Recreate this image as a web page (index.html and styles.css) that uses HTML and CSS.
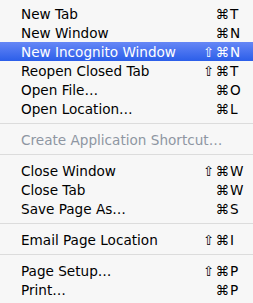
FILE: index.html
```html
<!DOCTYPE html>
<html lang="en">
<head>
    <meta charset="UTF-8">
    <title>File Menu</title>
    <link rel="stylesheet" href="styles.css">
</head>
<body>
    <div class="menu">
        <div class="item"><span class="label">New Tab</span><span class="mods">⌘</span><span class="key">T</span></div>
        <div class="item"><span class="label">New Window</span><span class="mods">⌘</span><span class="key">N</span></div>
        <div class="item selected"><span class="label">New Incognito Window</span><span class="mods">⇧⌘</span><span class="key">N</span></div>
        <div class="item"><span class="label">Reopen Closed Tab</span><span class="mods">⇧⌘</span><span class="key">T</span></div>
        <div class="item"><span class="label">Open File…</span><span class="mods">⌘</span><span class="key">O</span></div>
        <div class="item"><span class="label">Open Location…</span><span class="mods">⌘</span><span class="key">L</span></div>
        <div class="separator"></div>
        <div class="item disabled"><span class="label">Create Application Shortcut…</span></div>
        <div class="separator"></div>
        <div class="item"><span class="label">Close Window</span><span class="mods">⇧⌘</span><span class="key">W</span></div>
        <div class="item"><span class="label">Close Tab</span><span class="mods">⌘</span><span class="key">W</span></div>
        <div class="item"><span class="label">Save Page As…</span><span class="mods">⌘</span><span class="key">S</span></div>
        <div class="separator"></div>
        <div class="item"><span class="label">Email Page Location</span><span class="mods">⇧⌘</span><span class="key">I</span></div>
        <div class="separator"></div>
        <div class="item"><span class="label">Page Setup…</span><span class="mods">⇧⌘</span><span class="key">P</span></div>
        <div class="item"><span class="label">Print…</span><span class="mods">⌘</span><span class="key">P</span></div>
    </div>
</body>
</html>
```

FILE: styles.css
```css
body {
    margin: 0;
    background-color: #f7f7f7;
    font-family: "DejaVu Sans", "Lucida Grande", sans-serif;
    font-size: 13.6px;
    color: #000;
}
.menu {
    width: 253px;
    padding: 4px 0;
}
.item {
    display: flex;
    align-items: center;
    height: 19px;
    padding: 0 9px 0 21px;
}
.item .label {
    flex: 1;
    white-space: nowrap;
}
.item .mods {
    text-align: right;
    white-space: nowrap;
    letter-spacing: 1px;
}
.item .key {
    width: 14px;
}
.item.selected {
    background: linear-gradient(to bottom, #6687f6, #2b5ee9);
    color: #fff;
}
.item.disabled {
    color: #8e96a2;
}
.separator {
    height: 1px;
    margin: 5px 0 6px;
    background-color: #dcdcdc;
}
```
